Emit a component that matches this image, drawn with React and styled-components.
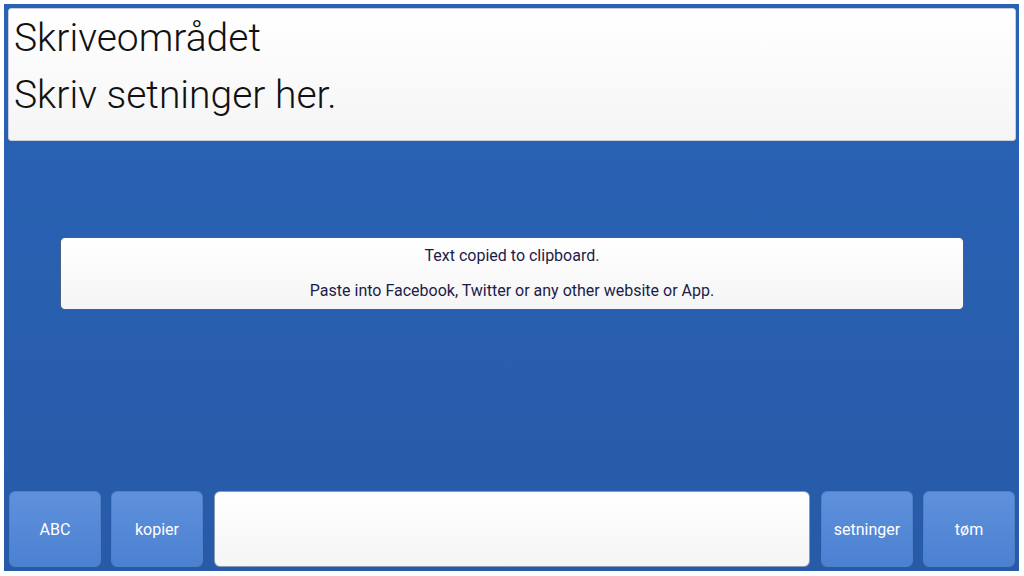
import React from 'react';
import styled, { createGlobalStyle } from 'styled-components';

const GlobalStyle = createGlobalStyle`
  html, body {
    margin: 0;
    padding: 0;
    background: #ffffff;
    font-family: Roboto, 'Liberation Sans', sans-serif;
  }
`;

export default function App() {
  const [text, setText] = React.useState('');

  return (
    <Frame>
      <GlobalStyle />
      <WritingArea>
        <WritingLine>Skriveområdet</WritingLine>
        <WritingLine>Skriv setninger her.</WritingLine>
      </WritingArea>

      <Middle>
        <Toast>
          <ToastLine>Text copied to clipboard.</ToastLine>
          <ToastLine>Paste into Facebook, Twitter or any other website or App.</ToastLine>
        </Toast>
      </Middle>

      <BottomBar>
        <KeyButton>ABC</KeyButton>
        <KeyButton>kopier</KeyButton>
        <Entry value={text} onChange={(e) => setText(e.target.value)} />
        <KeyButton>setninger</KeyButton>
        <KeyButton>tøm</KeyButton>
      </BottomBar>
    </Frame>
  );
}

const Frame = styled.div`
  box-sizing: border-box;
  margin: 4px 5px 5px 4px;
  height: 567px;
  padding: 4px 3px 4px 4px;
  display: flex;
  flex-direction: column;
  background: linear-gradient(to bottom, #2a63b6 0%, #275ba8 100%);
`;

const WritingArea = styled.div`
  box-sizing: border-box;
  height: 133px;
  padding: 1px 5px;
  background: linear-gradient(to bottom, #ffffff 0%, #f5f5f5 100%);
  border: 1px solid #c9cfd8;
  border-radius: 3px;
`;

const WritingLine = styled.div`
  font-family: Roboto, 'Liberation Sans', sans-serif;
  font-weight: 300;
  font-size: 39px;
  line-height: 57px;
  color: #111111;
  white-space: nowrap;
`;

const Middle = styled.div`
  flex: 1;
  display: flex;
  justify-content: center;
  align-items: flex-start;
  padding-top: 96px;
`;

const Toast = styled.div`
  box-sizing: border-box;
  width: 904px;
  height: 73px;
  padding: 7px 10px 0;
  display: flex;
  flex-direction: column;
  align-items: center;
  gap: 14px;
  background: linear-gradient(to bottom, #ffffff 0%, #f5f5f5 100%);
  border: 1px solid #4d5f80;
  border-radius: 5px;
`;

const ToastLine = styled.div`
  font-family: Roboto, 'Liberation Sans', sans-serif;
  font-size: 16px;
  line-height: 21px;
  color: #1c1c4a;
`;

const BottomBar = styled.div`
  display: flex;
  align-items: stretch;
  gap: 10px;
  height: 76px;
  padding: 0 1px;
`;

const KeyButton = styled.button`
  box-sizing: border-box;
  width: 92px;
  flex: none;
  border: 1px solid #4f7fc6;
  border-radius: 6px;
  background: linear-gradient(to bottom, #5f91db 0%, #4b81d2 100%);
  color: #ffffff;
  font-family: Roboto, 'Liberation Sans', sans-serif;
  font-size: 16px;
  cursor: pointer;
  padding: 0;
`;

const Entry = styled.input`
  box-sizing: border-box;
  flex: 1;
  min-width: 0;
  margin: 0 1px;
  border: 1px solid #8a9bb5;
  border-radius: 6px;
  background: linear-gradient(to bottom, #ffffff 0%, #f5f5f5 100%);
  font-family: Roboto, 'Liberation Sans', sans-serif;
  font-size: 20px;
  padding: 0 10px;
  outline: none;
`;
